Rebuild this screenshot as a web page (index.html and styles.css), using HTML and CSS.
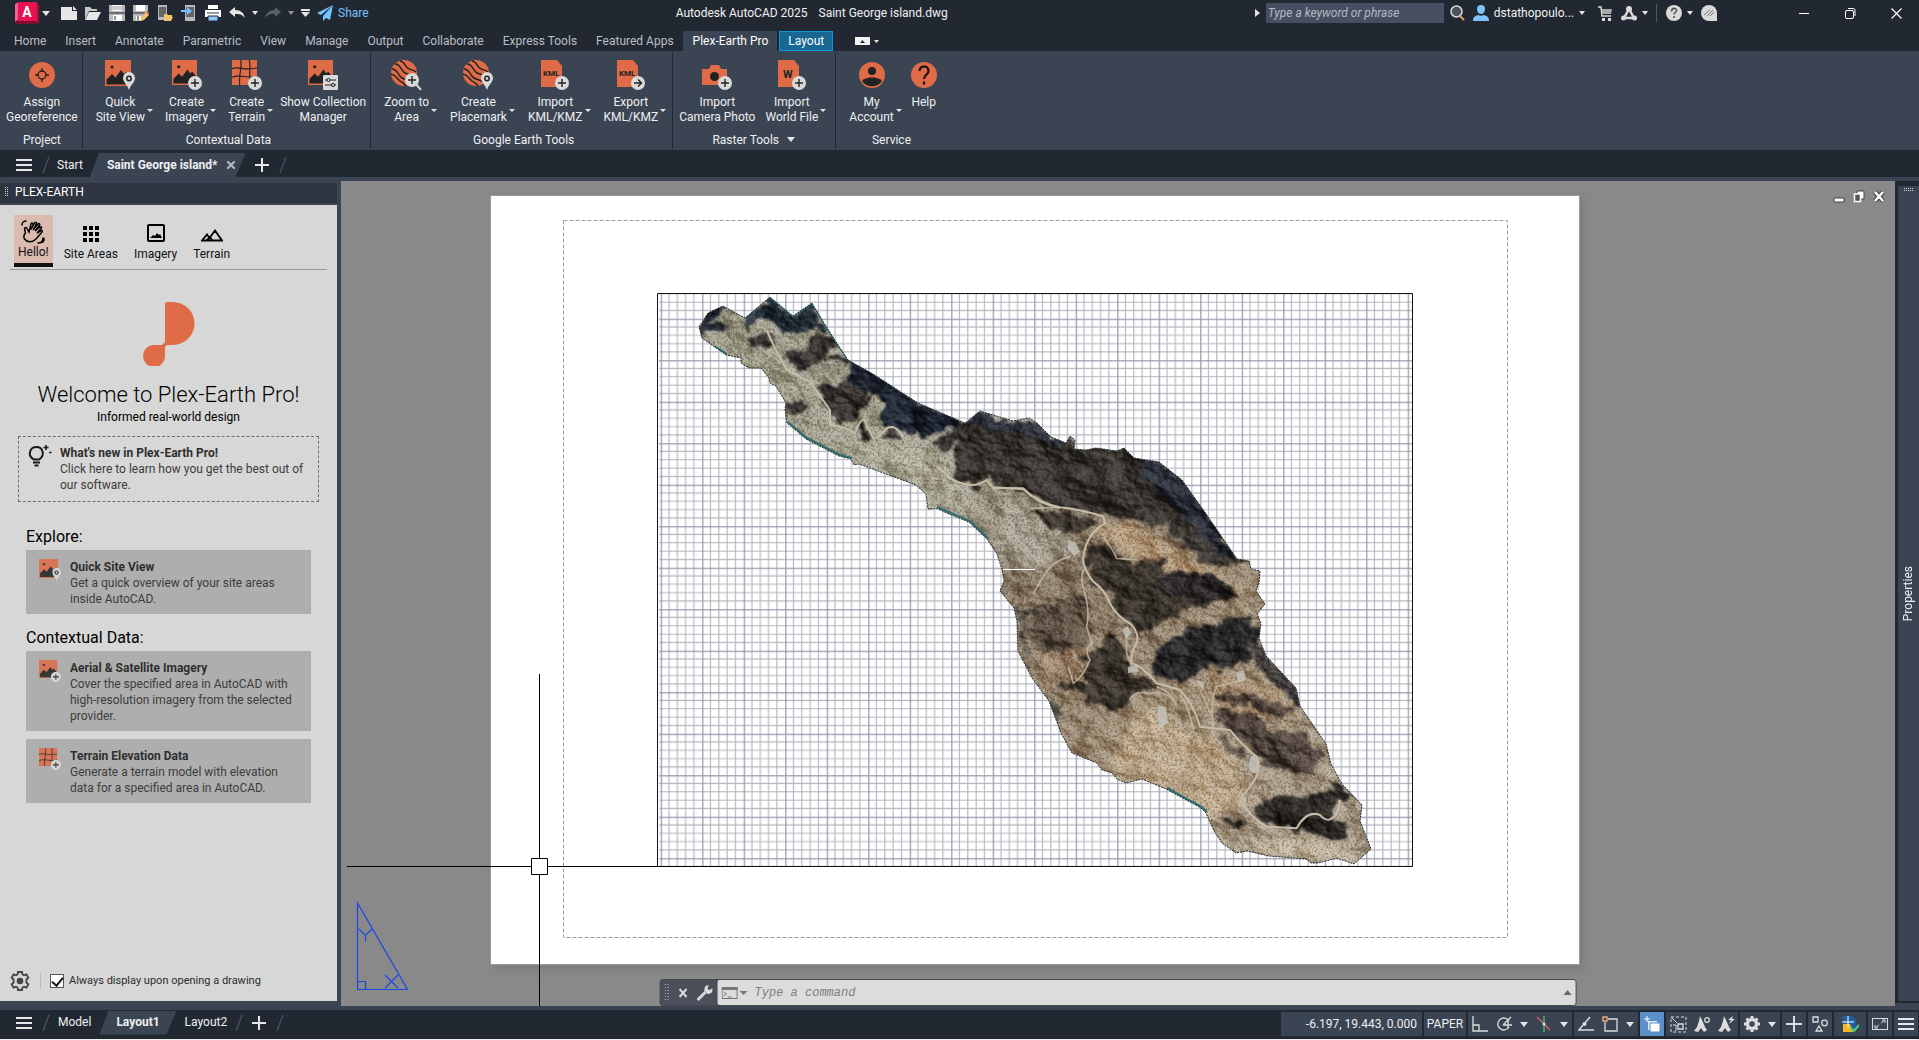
FILE: index.html
```html
<!DOCTYPE html>
<html lang="en">
<head>
    <meta charset="UTF-8">
    <meta name="viewport" content="width=device-width, initial-scale=1.0">
    <title>Autodesk AutoCAD 2025 - Saint George island.dwg</title>
    <link rel="stylesheet" href="styles.css">
</head>
<body>
    <!-- shared icons -->
    <svg class="sprite" aria-hidden="true">
        <symbol id="b-plus" viewBox="0 0 14 14">
            <circle cx="7" cy="7" r="7" fill="#d9d9d9"/>
            <path d="M7 3v8M3 7h8" stroke="#222" stroke-width="1.4"/>
        </symbol>
        <symbol id="b-pin" viewBox="0 0 12 18">
            <path d="M6 18C4.500 13 0 10 0 6a6 6 0 0 1 12 0c0 4-4.500 7-6 12z" fill="#d9d9d9"/>
            <circle cx="6" cy="6.500" r="2.200" fill="none" stroke="#222" stroke-width="1.500"/>
        </symbol>
        <symbol id="picture" viewBox="0 0 26 26">
            <path fill="#df6c46" d="M0 0h26v26H0z"/>
            <circle cx="7" cy="7" r="1.600" fill="#222"/>
            <path d="M1.500 24.500v-5L7 14l3.500 3.500L16 10l3 4 2-2 4 5v7.500z" fill="#222"/>
        </symbol>
        <symbol id="mesh" viewBox="0 0 26 26">
            <path fill="#df6c46" d="M0 0h26v26H0z"/>
            <path d="M9 0c2 6-2 12-1 26M18 0c2 7-1 13 1 26M0 9c7-3 14 3 26-1M0 18c8-4 16 2 26-1" fill="none" stroke="#222" stroke-width="1.200"/>
        </symbol>
        <symbol id="globe" viewBox="0 0 26 26">
            <circle cx="13" cy="13" r="13" fill="#df6c46"/>
            <path d="M9 1c5 0 5 7 9 8s5 1 7 3M4 4c6 0 6 7 10 9s6 1 11 4M1 9c6 0 6 7 10 9s6 2 10 4M0 14c5 1 6 5 9 7s4 2 6 5" fill="none" stroke="#222" stroke-width="1.500"/>
        </symbol>
        <symbol id="sheet" viewBox="0 0 21 27">
            <path fill="#df6c46" d="M0 0h16l5 6v21H0z"/>
        </symbol>
        <symbol id="i-site" viewBox="0 0 30 30">
            <use href="#picture" width="26" height="26"/>
            <use href="#b-pin" x="18" y="12" width="12" height="18"/>
        </symbol>
        <symbol id="i-imagery" viewBox="0 0 30 30">
            <use href="#picture" width="25" height="25"/>
            <use href="#b-plus" x="16" y="16" width="14" height="14"/>
        </symbol>
        <symbol id="i-terrain" viewBox="0 0 30 30">
            <use href="#mesh" width="25" height="25"/>
            <use href="#b-plus" x="16" y="16" width="14" height="14"/>
        </symbol>
        <symbol id="i-menu" viewBox="0 0 16 14">
            <path d="M0 2h16M0 7h16M0 12h16" stroke="#e6e6e6" stroke-width="2"/>
        </symbol>
        <symbol id="i-plus" viewBox="0 0 14 14">
            <path d="M7 0v14M0 7h14" stroke="#e6e6e6" stroke-width="2"/>
        </symbol>
        <symbol id="i-slash" viewBox="0 0 8 16">
            <path d="M1 16L7 0" stroke="#4d5766" stroke-width="1.200"/>
        </symbol>
    </svg>

    <header class="titlebar">
        <button class="app-logo" aria-label="Application menu">
            <svg width="24" height="22" viewBox="0 0 24 22">
                <path d="M0 2l4-2v17l-4 3z" fill="#f0609a"/>
                <path d="M3 18h18l3 4H0z" fill="#7d0d2c"/>
                <path d="M21 0l3 3v19l-3-3z" fill="#a01238"/>
                <path d="M3 0h19v19H3z" fill="#e8114f"/>
                <text x="12" y="15" text-anchor="middle" class="logo-letter">A</text>
            </svg>
            <i class="caret"></i>
        </button>
        <button class="qa" aria-label="New"><svg width="16" height="16"><path d="M0 2h11v4h5v9H0z" fill="#e6e6e6"/><path d="M12 1l4 4h-4z" fill="#e6e6e6"/></svg></button>
        <button class="qa" aria-label="Open"><svg width="16" height="16"><path d="M0 14V2h5l2 2h5v2H4z" fill="#c9c9c9"/><path d="M4 7h12l-4 8H0z" fill="#e6e6e6"/></svg></button>
        <button class="qa" aria-label="Save"><svg width="16" height="16"><path d="M0 0h16v16H0z" fill="#b9b9b9"/><path d="M3 0h10v6H3zM4 10h9v6H4z" fill="#fff"/><path d="M3 2h10M3 4h10" stroke="#999"/><path d="M0 8h16M6 11v4" stroke="#22272f"/></svg></button>
        <button class="qa" aria-label="Save as"><svg width="16" height="16"><path d="M0 0h15v8l-7 8H0z" fill="#b9b9b9"/><path d="M3 0h9v6H3zM3 11h5v4H3z" fill="#fff"/><path d="M0 8h12M5 11v4" stroke="#22272f"/><path d="M8 13l5-6 3 3-5 5-3 1z" fill="#f0c469"/><path d="M13 7l1.500-1L16 8v2z" fill="#e35b4c"/></svg></button>
        <button class="qa" aria-label="Open from web and mobile"><svg width="16" height="16"><path d="M1 0h9v15H1z" fill="#b9b9b9"/><path d="M2 2h7v10H2z" fill="#666"/><path d="M7 16V9h3l1 1h4v2h1l-2 4z" fill="#f0c469"/></svg></button>
        <button class="qa" aria-label="Save to web and mobile"><svg width="16" height="16"><path d="M4 0h10v16H4z" fill="#b9b9b9"/><path d="M5 2h8v10H5z" fill="#666"/><path d="M0 5h6V2l5 4-5 4V7H0z" fill="#74c2ff"/></svg></button>
        <button class="qa" aria-label="Plot"><svg width="16" height="16"><path d="M3 0h10v4H3zM0 5h16v7H0z" fill="#fff"/><path d="M2 8h12" stroke="#333"/><path d="M3 11h10v5H3z" fill="#8ccbff" stroke="#22272f"/></svg></button>
        <button class="qa" aria-label="Undo"><svg width="16" height="12"><path d="M0 5l6-5v3c6 0 9 3 10 8-3-4-6-4-10-4v3z" fill="#e6e6e6"/></svg></button>
        <button class="qa-arrow" aria-label="Undo list"><i class="caret small"></i></button>
        <button class="qa" aria-label="Redo"><svg width="16" height="12"><path d="M16 5l-6-5v3C4 3 1 6 0 11c3-4 6-4 10-4v3z" fill="#596069"/></svg></button>
        <button class="qa-arrow" aria-label="Redo list"><i class="caret small dim"></i></button>
        <button class="qa-custom" aria-label="Customize"><svg width="9" height="8"><path d="M0 1h9" stroke="#e6e6e6" stroke-width="2"/><path d="M0 3h9L4.500 8z" fill="#e6e6e6"/></svg></button>
        <button class="share"><svg width="16" height="16"><path d="M16 0L0 8l4 2zM16 0L6 11v5l3-3 4 2z" fill="#74c2ff"/></svg>Share</button>

        <h1 class="doc-title">Autodesk AutoCAD 2025 <span>Saint George island.dwg</span></h1>

        <div class="title-right">
            <svg width="5" height="8"><path d="M0 0l5 4-5 4z" fill="#e6e6e6"/></svg>
            <input class="search" type="text" placeholder="Type a keyword or phrase" aria-label="Search">
            <button class="icon-btn" aria-label="Find"><svg width="15" height="16"><circle cx="6.500" cy="6.500" r="5.500" fill="#4b535e" stroke="#d9d9d9" stroke-width="1.500"/><path d="M10 11l4 4" stroke="#d8a468" stroke-width="2"/></svg></button>
            <button class="user"><svg width="16" height="16"><path d="M4 4a4 4 0 0 1 8 0c0 3-2 5-4 5S4 7 4 4zM0 16c0-4 2-5 5-6 2 1 4 1 6 0 3 1 5 2 5 6z" fill="#80c4ff"/></svg>dstathopoulo...<i class="caret small"></i></button>
            <button class="icon-btn cart" aria-label="Cart"><svg width="14" height="15"><path d="M0 1h3l1 9h9" fill="none" stroke="#d9d9d9" stroke-width="1.500"/><path d="M4 3h10l-1 5H4z" fill="#a9a9a9"/><path d="M4 12h3v3H4zM10 12h3v3h-3z" fill="#d9d9d9"/></svg></button>
            <button class="icon-btn" aria-label="Autodesk App Store"><svg width="16" height="15"><path d="M8 3L3 12h10z" fill="none" stroke="#d9d9d9" stroke-width="2.500"/><circle cx="8" cy="3" r="3" fill="#d9d9d9"/><circle cx="2.500" cy="12" r="2.500" fill="#d9d9d9"/><circle cx="13.500" cy="12" r="2.500" fill="#d9d9d9"/></svg><i class="caret small"></i></button>
            <span class="bar"></span>
            <button class="icon-btn help-top" aria-label="Help"><svg width="16" height="16"><circle cx="8" cy="8" r="8" fill="#d9d9d9"/><path d="M5.500 6.500c0-4 5-4 5-1 0 2-2.500 2-2.500 4M8 11v2" fill="none" stroke="#555" stroke-width="1.600"/></svg><i class="caret small"></i></button>
            <button class="icon-btn" aria-label="Feedback"><svg width="16" height="16"><path d="M8 0a8 8 0 0 1 8 8v8H8A8 8 0 0 1 8 0z" fill="#d9d9d9"/><path d="M3 10l6-5M6 11l6-6M9 11l4-4" stroke="#777"/></svg></button>
            <div class="window-btns">
                <button aria-label="Minimize"><svg width="10" height="10"><path d="M0 5.500h10" stroke="#fff"/></svg></button>
                <button aria-label="Restore"><svg width="11" height="11"><rect x=".5" y="2.500" width="8" height="8" rx="1.500" fill="none" stroke="#fff"/><path d="M3 .5h5a2 2 0 0 1 2 2V8" fill="none" stroke="#fff"/></svg></button>
                <button aria-label="Close"><svg width="11" height="11"><path d="M.5.5l10 10M10.500.5l-10 10" stroke="#fff" stroke-width="1.200"/></svg></button>
            </div>
        </div>
    </header>

    <nav class="ribbon-tabs">
        <button>Home</button>
        <button>Insert</button>
        <button>Annotate</button>
        <button>Parametric</button>
        <button>View</button>
        <button>Manage</button>
        <button>Output</button>
        <button>Collaborate</button>
        <button>Express Tools</button>
        <button>Featured Apps</button>
        <button class="active">Plex-Earth Pro</button>
        <button class="context">Layout</button>
        <button class="minimize" aria-label="Minimize ribbon"><svg width="24" height="8"><path d="M0 0h15v8H0z" fill="#f2f2f2"/><path d="M5 6l2.500-3L10 6z" fill="#22272f"/><path d="M19 3h5l-2.500 3z" fill="#e6e6e6"/></svg></button>
    </nav>

    <section class="ribbon">
        <div class="group">
            <div class="tools">
                <button class="tool"><svg width="30" height="30"><circle cx="15" cy="15" r="13" fill="#df6c46"/><circle cx="15" cy="15" r="4" fill="none" stroke="#222" stroke-width="1.300"/><path d="M15 8v4M15 18v4M8 15h4M18 15h4" stroke="#222" stroke-width="1.300"/></svg><span>Assign<br>Georeference</span></button>
            </div>
            <h2>Project</h2>
        </div>
        <div class="group">
            <div class="tools">
                <button class="tool menu"><svg width="30" height="30"><use href="#i-site"/></svg><span>Quick<br>Site View</span></button>
                <button class="tool menu"><svg width="30" height="30"><use href="#i-imagery"/></svg><span>Create<br>Imagery</span></button>
                <button class="tool menu"><svg width="30" height="30"><use href="#i-terrain"/></svg><span>Create<br>Terrain</span></button>
                <button class="tool"><svg width="30" height="30"><use href="#picture" width="25" height="25"/><rect x="15" y="15" width="15" height="15" rx="1" fill="#d9d9d9"/><path d="M17 20h11M17 25h11" stroke="#222"/><circle cx="20.500" cy="20" r="1.600" fill="#d9d9d9" stroke="#222"/><circle cx="25" cy="25" r="1.600" fill="#d9d9d9" stroke="#222"/></svg><span>Show Collection<br>Manager</span></button>
            </div>
            <h2>Contextual Data</h2>
        </div>
        <div class="group roomy">
            <div class="tools">
                <button class="tool menu"><svg width="31" height="30"><use href="#globe" width="26" height="26"/><path d="M24 23l6 7" stroke="#d9d9d9" stroke-width="2"/><use href="#b-plus" x="14" y="13" width="14" height="14"/></svg><span>Zoom to<br>Area</span></button>
                <button class="tool menu"><svg width="30" height="30"><use href="#globe" width="26" height="26"/><use href="#b-pin" x="18" y="12" width="12" height="18"/></svg><span>Create<br>Placemark</span></button>
                <button class="tool menu"><svg width="30" height="30"><use href="#sheet" x="1" width="21" height="27"/><text x="3" y="16" class="kml">KML</text><use href="#b-plus" x="15" y="16" width="14" height="14"/></svg><span>Import<br>KML/KMZ</span></button>
                <button class="tool menu"><svg width="30" height="30"><use href="#sheet" x="1" width="21" height="27"/><text x="3" y="16" class="kml">KML</text><circle cx="22" cy="23" r="7" fill="#d9d9d9"/><path d="M18 23h7M22 19.500l3.500 3.500-3.500 3.500" fill="none" stroke="#222" stroke-width="1.400"/></svg><span>Export<br>KML/KMZ</span></button>
            </div>
            <h2>Google Earth Tools</h2>
        </div>
        <div class="group tight">
            <div class="tools">
                <button class="tool"><svg width="30" height="30"><path d="M0 9h7l2-4h8l2 4h6v16H0z" fill="#df6c46"/><circle cx="12.500" cy="16.500" r="4.500" fill="#222"/><use href="#b-plus" x="16" y="16" width="14" height="14"/></svg><span>Import<br>Camera Photo</span></button>
                <button class="tool menu"><svg width="30" height="30"><use href="#sheet" x="1" width="21" height="27"/><text x="6" y="18" class="wf">W</text><use href="#b-plus" x="15" y="16" width="14" height="14"/></svg><span>Import<br>World File</span></button>
            </div>
            <h2>Raster Tools <i class="caret"></i></h2>
        </div>
        <div class="group last">
            <div class="tools">
                <button class="tool menu"><svg width="30" height="30"><circle cx="15" cy="15" r="13" fill="#df6c46"/><circle cx="15" cy="11" r="4" fill="#222"/><path d="M5 21c5-5 15-5 20 0a12 12 0 0 1-20 0z" fill="#222"/></svg><span>My<br>Account</span></button>
                <button class="tool"><svg width="30" height="30"><circle cx="15" cy="15" r="13" fill="#df6c46"/><path d="M10.500 11c0-6 9-6 9 0 0 4-4.500 3.500-4.500 8M15 21.500v3" fill="none" stroke="#111" stroke-width="2.200"/></svg><span>Help<br>&nbsp;</span></button>
            </div>
            <h2>Service</h2>
        </div>
    </section>

    <nav class="file-tabs">
        <button aria-label="Menu"><svg width="16" height="14"><use href="#i-menu"/></svg></button>
        <svg class="slash" width="8" height="16"><use href="#i-slash"/></svg>
        <button class="ftab">Start</button>
        <button class="ftab active">Saint George island*<svg width="8" height="8"><path d="M0 0l8 8M8 0L0 8" stroke="#b5bac2" stroke-width="2"/></svg></button>
        <button class="add" aria-label="New drawing"><svg width="14" height="14"><use href="#i-plus"/></svg></button>
        <svg class="slash" width="8" height="16"><use href="#i-slash"/></svg>
    </nav>

    <main class="workspace">
        <aside class="palette">
            <div class="palette-title"><i class="grip"></i>PLEX-EARTH</div>
            <div class="palette-body">
                <div class="ptabs">
                    <button class="ptab active">
                        <svg width="24" height="24" viewBox="0 0 24 24" fill="none" stroke="#000" stroke-width="1.500" stroke-linecap="round"><path d="M4.500 13L3.500 9c0-2 2-2 2.500-.5L8 12l2-8c1-1.500 2-1 2 .5M10 9l3.500-6c1-1.200 2.300-.4 2 .8L12 10l5-6c1.200-1 2.300 0 1.500 1.200L14 11l5-4c1.400-.6 2 .6 1.200 1.600L16 13l4-2.500c1.400-.3 1.700 1 .8 1.800L15 19c-4 4-9 3.500-11.500 0-1-2-1-4 1-6"/><path d="M1 5c0-2 1.500-4 4-4M20 22.500c2 0 3.500-2 3-4M17 23c2 0 5-1 5-5"/></svg>
                        <span>Hello!</span>
                    </button>
                    <button class="ptab">
                        <svg width="16" height="16"><path d="M0 0h4v4H0zM6 0h4v4H6zM12 0h4v4h-4zM0 6h4v4H0zM6 6h4v4H6zM12 6h4v4h-4zM0 12h4v4H0zM6 12h4v4H6zM12 12h4v4h-4z"/></svg>
                        <span>Site Areas</span>
                    </button>
                    <button class="ptab">
                        <svg width="18" height="18"><rect x="1" y="1" width="16" height="16" rx="1" fill="none" stroke="#000" stroke-width="2"/><path d="M3 14l3-3 2 1 2-3 2 2 1-1 2 4z"/></svg>
                        <span>Imagery</span>
                    </button>
                    <button class="ptab">
                        <svg width="22" height="14"><path d="M1 12.500l5-6 2.500 3.500L14 2.500l7 10zM6 12l3-3 2 3" fill="none" stroke="#000" stroke-width="1.800"/></svg>
                        <span>Terrain</span>
                    </button>
                </div>

                <svg class="brand" width="52" height="64" viewBox="0 0 52 64"><path d="M22 2a2 2 0 0 1 2-2h6a21 21 0 0 1 0 43h-6l-2 2v8a11 11 0 1 1-11-10h8l3-3z" fill="#df6c46"/></svg>
                <h2 class="welcome">Welcome to Plex-Earth Pro!</h2>
                <p class="tagline">Informed real-world design</p>

                <button class="news">
                    <svg width="24" height="22" viewBox="0 0 24 22" fill="none" stroke="#1b1b1b" stroke-width="2"><path d="M6 14.500C-1 11 1.500 2 8.500 2S17 11 11 14.500zM5 17.500h7M6.500 20.500h4"/><path d="M18 0v5M15.500 2.500h5M21 7.500h2.500" stroke-width="1.600"/></svg>
                    <span><b>What's new in Plex-Earth Pro!</b>Click here to learn how you get the best out of our software.</span>
                </button>

                <h3>Explore:</h3>
                <button class="card">
                    <svg width="22" height="22" viewBox="0 0 30 30"><use href="#i-site"/></svg>
                    <span><b>Quick Site View</b>Get a quick overview of your site areas inside AutoCAD.</span>
                </button>
                <h3>Contextual Data:</h3>
                <button class="card">
                    <svg width="22" height="22" viewBox="0 0 30 30"><use href="#i-imagery"/></svg>
                    <span><b>Aerial &amp; Satellite Imagery</b>Cover the specified area in AutoCAD with high-resolution imagery from the selected provider.</span>
                </button>
                <button class="card">
                    <svg width="22" height="22" viewBox="0 0 30 30"><use href="#i-terrain"/></svg>
                    <span><b>Terrain Elevation Data</b>Generate a terrain model with elevation data for a specified area in AutoCAD.</span>
                </button>

                <div class="palette-foot">
                    <button aria-label="Settings"><svg width="20" height="20" viewBox="0 0 20 20"><path d="M8 1h4l.5 2.500 1.500.8 2.400-1 2 3.400-2 1.700v3.200l2 1.700-2 3.400-2.400-1-1.500.8L12 19H8l-.5-2.500-1.500-.8-2.400 1-2-3.400 2-1.700V8.400l-2-1.700 2-3.400 2.400 1 1.500-.8z" fill="none" stroke="#444" stroke-width="1.800"/><circle cx="10" cy="10" r="3.300" fill="#444"/></svg></button>
                    <i class="sep"></i>
                    <input type="checkbox" id="always" checked>
                    <label for="always">Always display upon opening a drawing</label>
                </div>
            </div>
        </aside>

        <section class="canvas">
            <svg class="drawing" viewBox="341 181 1554 825">
                <defs>
                    <pattern id="grid" x="660.700" y="318.700" width="41.500" height="41.500" patternUnits="userSpaceOnUse">
                        <path d="M8.300 0v41.500M16.600 0v41.500M24.900 0v41.500M33.200 0v41.500M0 8.300h41.500M0 16.600h41.500M0 24.900h41.500M0 33.200h41.500" stroke="#b4b5bd" stroke-width="1.100"/>
                        <path d="M.6 0v41.500M0 .6h41.500" stroke="#9699ab" stroke-width="1.300"/>
                    </pattern>
                    <path id="outline" d="M699 327l9-14 15-7 22 12 25-21 23 19 19-13 15 25 21 32 25 14 45 29 47 20 15-12 33 10 16-3 8 5 14 14 15 6 4-7 5 4-1 9 12 1 10-2 21 3 7-3 10 10 25 4 23 18 20 28 35 51 12 2 2 8 9 2-1 12-3 8 9 13-8 10 4 9-2 15 7 18 30 32 4 18 26 38 5 20 11 20 20 21-2 16 11 28-17 15-17-6-19 5h-7l-5-4-37-3-22-5-11 2-14-10-8-12-8-18-5-5-35-19-24-10-16 4-9-4-5-6-10-3-5-7-25-10-11-20-12-32-17-23-14-27-1-30-3-13-14-17 4-10-2-12-5-15-10-15-18-17-20-8-13-6-4 1h-4l-2-15-10-9-57-21-5 1-3-6-12-3-33-17-19-16-2-14 1-6-10-17-6-3-1-5-8-10h-12l-8-5v-5l-15-3-24-17z"/>
                    <clipPath id="coast"><use href="#outline"/></clipPath>
                    <linearGradient id="land" x1="0" y1="0" x2="1" y2="1">
                        <stop offset="0" stop-color="#a9a693"/>
                        <stop offset=".35" stop-color="#b5b2a0"/>
                        <stop offset=".5" stop-color="#94846f"/>
                        <stop offset=".72" stop-color="#ad9b82"/>
                        <stop offset="1" stop-color="#b9af9c"/>
                    </linearGradient>
                    <filter id="rough" x="-5%" y="-5%" width="110%" height="110%">
                        <feTurbulence type="fractalNoise" baseFrequency=".07" numOctaves="5" seed="4"/>
                        <feDisplacementMap in="SourceGraphic" scale="18" xChannelSelector="R" yChannelSelector="G"/>
                        <feGaussianBlur stdDeviation="1"/>
                    </filter>
                    <filter id="grain" x="0" y="0" width="100%" height="100%" color-interpolation-filters="sRGB">
                        <feTurbulence type="fractalNoise" baseFrequency=".45" numOctaves="3" seed="9"/>
                        <feColorMatrix values="0 0 0 0 .12  0 0 0 0 .11  0 0 0 0 .12  3.400 0 0 0 -1.600"/>
                    </filter>
                    <filter id="relief" x="0" y="0" width="100%" height="100%" color-interpolation-filters="sRGB">
                        <feTurbulence type="fractalNoise" baseFrequency=".03 .04" numOctaves="5" seed="12"/>
                        <feDiffuseLighting surfaceScale="11" diffuseConstant=".72" lighting-color="#fff">
                            <feDistantLight azimuth="150" elevation="42"/>
                        </feDiffuseLighting>
                    </filter>
                    <filter id="soft"><feGaussianBlur stdDeviation="4"/></filter>
                </defs>

                <!-- paper -->
                <path d="M494 198h1090v771H494z" fill="#707070" opacity=".55" filter="url(#soft)"/>
                <path d="M490.500 195.500h1089v769h-1089z" fill="#fff" stroke="#9b9b9b"/>
                <path d="M563.500 220.500h944v717h-944z" fill="none" stroke="#9a9a9a" stroke-dasharray="4 2"/>
                <path d="M659 294h754v572H659z" fill="url(#grid)"/>

                <!-- island -->
                <g clip-path="url(#coast)" class="island">
                    <path d="M690 290h690v580H690z" fill="url(#land)"/>
                    <g filter="url(#soft)">
                        <path d="M1130 720l30-15 20 25 50 10 20 60-40 20-60-25-40-30z" fill="#c9b598"/>
                        <path d="M1090 530l40-10 40 25 50 30 25 15-10 10-40-20-60-20z" fill="#c0a685"/>
                        <path d="M1035 650l60 0 0 40-50 0z" fill="#b0967a" opacity=".7"/>
                        <path d="M1005 500l40 10 30 40-40 20-40-20z" fill="#b3ad9d"/>
                        <path d="M1240 840l60-5 60 15-10 10-90-5z" fill="#cbbea6"/>
                        <path d="M860 430l50 15 60 50-30-5-70-35z" fill="#bdb9a6"/>
                        <path d="M1210 670l70 20 20 30-90-10z" fill="#b39a7c"/>
                    </g>
                    <g filter="url(#rough)">
                        <g transform="translate(640 280) scale(.3333)" fill="#3d3834">
                            <path d="M178 142l27-42 45-22-15 25-22 24 55 12-68 15-10 15z" fill="#222b38"/>
                            <path d="M315 115l75-65 70 57 57-37 40 70-40 5-65 20-35-10-10-25-30-5-60 20z" fill="#2c3640"/>
                            <path d="M330 185l50-35 20 50-55 5zM430 225l50-5 20-40 40-20 50 10 15 30-65 35-40 35-30 5z"/>
                            <path d="M540 235l85-5 75 42 60 45-30 8-40-20-20 50 30-15-50 80-45 15-35-40-40-75 70-12 35-20 5-35-60 0z"/>
                            <path d="M640 240l60 30 135 95 145 62-40 16-60 12-50 5-40-10-50-10-20-40 10-30-60-40-50-35z" fill="#232c38"/>
                            <path d="M430 385l40-20 50 10-40 25-35 10zM660 460l10-36 22 48-42-5zM730 472l22-27 28 15 10 18z"/>
                            <path d="M760 400l60 20-20 40-30-10zM840 420l40 20-40 30zM910 460l50-20-40 50z" fill="#2a333f"/>
                            <path d="M975 430l45-38 100 30 48-7 92 65v205l-60-25-40-35-100-5-10-30-40 30-70-30 5-90 15-30-60 40-20-10 50-50z"/>
                        </g>
                        <g transform="translate(950 400) scale(.3333)" fill="#433a32">
                            <path d="M50 70l40-40 95 30 55-10 65 58 45 17 13-20 12 40 65-5 65 10 20-10 30 32 75 11 70 54 60 83 105 155 35 5-40 20-40 0-80-30-40-40-80-60-60-10-60 0-35-15-135-25-50-10-60-45-90-5-20-25-40 25-60-20 5-80z" fill="#413a35"/>
                            <path d="M50 70l40-40 95 30 55-10 65 58 45 17-20 20-60-30-90-20-60 0zM560 175l70 8 70 54 60 83 105 155-45-10-50-40-80-90-50-60-60-40z" fill="#2d333c"/>
                            <path d="M240 335l60-5 140 20v20l-80 40-70-40z"/>
                            <path d="M410 510l30-30 60-5 60 10 40-15 40 20 10 25 90 15 60 0 60 40 5 30-65 0-60 10-60 40-90 40-30 10-10-30-50-30-20-50-20-20-50-30zM420 430l60 5 20 40-60 5-40 20z"/>
                            <path d="M600 560l50-45 50 5 100 10 70 70-50-10-80 10-80-10z" fill="#322e2e"/>
                            <path d="M620 770l20-50 80-40 50 5 50-35 90-5 20 55-30 40-10 50-70 20-60-10-30 40-80 10-50-40z" fill="#2e2d2f"/>
                            <path d="M260 620l70-20 80-10 10 110-20 50-130 0-20-50z" opacity=".55"/>
                            <path d="M390 780l110-80 30 60 10 40 80 60-60 20-30 40-60 10-70-40-80-30 10-20 90 10z"/>
                            <path d="M800 880l70-10 80 30 90 20-40 35-100-35-100-20zM790 940l40-15 70 15 40 50 60 0 60 20 50 50-20 60-110-10-50-30-30-40-30-30-30-25-40-5z" opacity=".8"/>
                            <path d="M900 1210l100-20 130-15 20-40 50 45v30l-40-10 10 30-40 30 50 10 20 40-70 0-80-20-50-10-50-10-50-40zM800 1260l50-10 50 10-40 20z" fill="#302d2c"/>
                            <path d="M900 690l50 75 90 95 12 55-52-35-70-80-30-40z" fill="#2b2d31" opacity=".75"/>
                            <path d="M790 1010l90 30 30 50-40-10zM200 650l60-40 30-5-70 55zM210 690l50 0 40 10-60 10zM320 860l60-10 40 30-30 10z" opacity=".75"/>
                            <path d="M205 620l40 10-30 60 20 70-30-20zM280 880l60 60-10 50-40-60z" fill="#3b4140" opacity=".6"/>
                            <path d="M1045 920l90 110 40 110 60 70 0-60-90-140z" fill="#4b5254"/>
                        </g>
                    </g>
                    <path class="relief" d="M690 290h690v580H690z" filter="url(#relief)"/>
                    <path d="M690 290h690v580H690z" filter="url(#grain)" opacity=".35"/>
                    <!-- dirt roads -->
                    <g fill="none" stroke="#c5bda8" stroke-width="6" stroke-linejoin="round">
                        <path transform="translate(640 280) scale(.3333)" d="M380 150q20 50 60 120l70 35 60 85v45q50 5 75 25 15-40 27-42l28 57q20-5 40-30 30-15 50 30M890 560l50 40q60 30 100 0l20 25h90q40 45 110 60"/>
                        <g transform="translate(950 400) scale(.3333)">
                            <path d="M130 262l90 6q50 42 110 54 70 8 130 28l5 20q-55 30-65 100-5 30 30 75 35 25 50 65 20 40 60 60 30 30 20 60-20 30-15 60 35 10 75 60l70 20q40 40 60 110l90 10q40 50 80 80 20 40-20 90l-30 40q30 50 80 80l90 5q30-55 70-40 30 35 55-15l5-30"/>
                            <path d="M400 510q-10 30 5 70 15 60 5 100l15 50q-25 20-5 50-20 50-50 70l-15-50M240 325l90-3M460 410q30 40 40 65l60 5M360 470q-50 10-80 60l-30 50M540 900q10-30 60-20 60-10 80 40M620 860q50 20 60 60M690 880q30 50 40 110M530 700v60l15 40M790 980q-10-80 10-120l80-20M750 870l35 80" stroke-width="5" opacity=".8"/>
                        </g>
                    </g>
                    <g fill="#c4c4bd" opacity=".8">
                        <path d="M1068 540l8 2 4 10-6 4-6-8zM1122 630l6-4 3 8-5 5zM1128 667l10-2v7l-10 1zM1236 672l8-2 2 10-8 2zM1195 680l10 2-2 8zM1158 705l8 2 2 16-9 6z"/>
                        <ellipse cx="1254" cy="764" rx="5" ry="9"/>
                    </g>
                    <path d="M1003 569.500h32" stroke="#fff"/>
                    <path d="M788 422l19 16 33 17 12 3M937 507l33 14 18 17M1167 788l35 19 5 5M1301 705l26 38M1332 763l11 20 20 21M770 297l23 19 19-13 15 25 21 32M714 346l13 8M1361 820l11 28" fill="none" stroke="#2b6e70" stroke-width="2"/>
                </g>
                <use href="#outline" fill="none" stroke="#1d2a2c" stroke-dasharray="2 1"/>
                <path d="M657.500 293.500h755v573h-755z" fill="none" stroke="#111"/>

                <!-- crosshair -->
                <path d="M347 866.500h385M539.500 674v332" stroke="#000"/>
                <path d="M531.500 858.500h16v16h-16z" fill="#fff" stroke="#000"/>
                <!-- ucs -->
                <path d="M357.500 903v86.500h50zM357.500 981.500h8v8M359 929l6.500 6.500L372 929M365.500 935v6.500M385 975l13 13M398 975l-13 13" fill="none" stroke="#1748e8" stroke-width="1.200"/>
            </svg>

            <div class="view-btns">
                <button aria-label="Minimize drawing"><svg width="12" height="13"><path d="M1 8h10v4H1z" fill="#fff" stroke="#444"/></svg></button>
                <button aria-label="Restore drawing"><svg width="12" height="13"><path d="M4 1h7v8H4z" fill="#fff" stroke="#444"/><path d="M1.500 4h6v7.500h-6z" fill="#555" stroke="#fff" stroke-width="1.500"/></svg></button>
                <button aria-label="Close drawing"><svg width="12" height="13"><path d="M2 2l8 9M10 2l-8 9" stroke="#444" stroke-width="4.500"/><path d="M2 2l8 9M10 2l-8 9" stroke="#fff" stroke-width="2.500"/></svg></button>
            </div>

            <div class="command">
                <i class="grip tall"></i>
                <button aria-label="Close"><svg width="9" height="10"><path d="M1 1l7 8M8 1L1 9" stroke="#d9d9d9" stroke-width="2"/></svg></button>
                <button aria-label="Customize"><svg width="16" height="16"><path d="M1 15L9 7" stroke="#d9d9d9" stroke-width="3"/><path d="M8 6c-1-3 1-6 4-6l-1 4 2 1 3-2c1 4-2 6-5 6z" fill="#d9d9d9"/></svg></button>
                <div class="command-line">
                    <button aria-label="Recent commands"><svg width="26" height="12"><rect x=".5" y=".5" width="15" height="11" fill="none" stroke="#777"/><path d="M0 0h16v3H0z" fill="#777"/><path d="M2 5l3 2-3 2M6 10h4" fill="none" stroke="#777"/><path d="M18 4h8l-4 4z" fill="#777"/></svg></button>
                    <input type="text" placeholder="Type a command" aria-label="Command">
                    <button aria-label="Command history"><svg width="8" height="5"><path d="M0 5l4-5 4 5z" fill="#666"/></svg></button>
                </div>
            </div>
        </section>

        <aside class="properties"><div><i class="grip wide"></i><span>Properties</span></div></aside>
    </main>

    <footer class="status">
        <nav class="file-tabs layouts">
            <button aria-label="Menu"><svg width="16" height="14"><use href="#i-menu"/></svg></button>
            <svg class="slash" width="8" height="16"><use href="#i-slash"/></svg>
            <button class="ftab">Model</button>
            <button class="ftab active">Layout1</button>
            <button class="ftab">Layout2</button>
            <svg class="slash" width="8" height="16"><use href="#i-slash"/></svg>
            <button class="add" aria-label="New layout"><svg width="14" height="14"><use href="#i-plus"/></svg></button>
            <svg class="slash" width="8" height="16"><use href="#i-slash"/></svg>
        </nav>
        <div class="status-tools">
            <button class="coords">-6.197, 19.443, 0.000</button>
            <button class="space">PAPER</button>
            <div class="cell">
                <button aria-label="Ortho"><svg width="16" height="16"><path d="M1 0v15h15M1 9h6v6" fill="none" stroke="#ddd" stroke-width="1.300"/></svg></button>
                <button aria-label="Polar tracking"><svg width="16" height="16"><path d="M13 5a6 6 0 1 0 0 6M7 9l8-8M7 9h9M12 5v8" fill="none" stroke="#ddd" stroke-width="1.300"/></svg></button>
                <button class="more" aria-label="Polar options"><i class="caret"></i></button>
                <button aria-label="Isometric drafting"><svg width="16" height="16"><path d="M1 1l13 13" stroke="#e0605e" stroke-width="1.300"/><path d="M8 0v16" stroke="#4fc77b" stroke-width="1.300"/><circle cx="8" cy="8" r="1.500" fill="#ddd"/></svg></button>
                <button class="more" aria-label="Isometric options"><i class="caret"></i></button>
            </div>
            <div class="cell">
                <button aria-label="Object snap tracking"><svg width="16" height="16"><path d="M12 1L1 14h15" fill="none" stroke="#ddd" stroke-width="1.400"/><circle cx="6.500" cy="8" r="2" fill="#ddd"/></svg></button>
                <button aria-label="Object snap"><svg width="17" height="16"><path d="M6 3h9v12H3V6" fill="none" stroke="#ddd" stroke-width="1.300"/><path d="M1 1h4v4H1z" fill="none" stroke="#f0a878" stroke-width="1.400"/></svg></button>
                <button class="more" aria-label="Snap options"><i class="caret"></i></button>
            </div>
            <div class="cell on">
                <button aria-label="Selection cycling"><svg width="16" height="16"><path d="M4 5h9v9H4z" fill="#dfe9f5"/><path d="M6 7h10v9H6z" fill="#fff" stroke="#5b8fc7"/><path d="M3 0v6M0 3h6" stroke="#fff"/></svg></button>
            </div>
            <div class="cell">
                <button aria-label="Isolate"><svg width="17" height="17"><path d="M1 1h15v15H1z" fill="none" stroke="#ddd" stroke-dasharray="3 2"/><path d="M8 8h5v5H8z" fill="none" stroke="#ddd" stroke-width="1.300"/><path d="M1 1l6 6M3 9h3v6" fill="none" stroke="#ddd"/></svg></button>
                <button aria-label="Annotation visibility"><svg width="17" height="16"><path d="M6 0l2 4 3 7 2 3-3 2-3-4-3 4-4-1 3-4 2-6z" fill="#ddd"/><circle cx="13" cy="4" r="2.300" fill="none" stroke="#ddd" stroke-width="1.300"/></svg></button>
                <button aria-label="Auto scale"><svg width="17" height="16"><path d="M6 0l2 4 3 7 2 3-3 2-3-4-3 4-4-1 3-4 2-6z" fill="#ddd"/><path d="M15 0l-5 4h3l-2 4 6-5h-3z" fill="#ddd"/></svg></button>
            </div>
            <div class="cell">
                <button aria-label="Workspace"><svg width="16" height="16"><circle cx="8" cy="8" r="4.500" fill="none" stroke="#ddd" stroke-width="3.500"/><path d="M8 0v3M8 13v3M0 8h3M13 8h3M2.500 2.500l2 2M11.500 11.500l2 2M13.500 2.500l-2 2M4.500 11.500l-2 2" stroke="#ddd" stroke-width="3"/></svg></button>
                <button class="more" aria-label="Workspace options"><i class="caret"></i></button>
            </div>
            <div class="cell"><button aria-label="Annotation monitor"><svg width="16" height="16"><path d="M8 0v16M0 8h16" stroke="#ddd" stroke-width="2"/></svg></button></div>
            <div class="cell"><button aria-label="Units"><svg width="16" height="16"><path d="M1 1h5v5H1zM4 15l3-5 3 5z" fill="none" stroke="#ddd" stroke-width="1.300"/><circle cx="12.500" cy="7" r="2.800" fill="none" stroke="#ddd" stroke-width="1.300"/></svg></button></div>
            <div class="cell wide"><button aria-label="Trusted file"><svg width="17" height="17"><path d="M1 0h9l4 4v11H1z" fill="#1f5fa8"/><path d="M1 8h7l3 8H1z" fill="#f5b829"/><path d="M6 0v11M0 6h12" stroke="#fff"/><path d="M9 12l3 3 5-6" fill="none" stroke="#4fd17c" stroke-width="2"/></svg></button></div>
            <div class="cell"><button aria-label="Clean screen"><svg width="16" height="12"><rect x=".5" y=".5" width="15" height="11" fill="none" stroke="#ddd"/><path d="M9 5l4-3M10 2h3v3M7 7l-4 3M3 7v3h3" fill="none" stroke="#ddd"/></svg></button></div>
            <div class="cell"><button aria-label="Customization"><svg width="16" height="14"><use href="#i-menu"/></svg></button></div>
        </div>
    </footer>
</body>
</html>
```
FILE: styles.css
```css
* {
    box-sizing: border-box;
}
body {
    margin: 0;
    height: 100vh;
    display: flex;
    flex-direction: column;
    overflow: hidden;
    background-color: #f0f0f0;
    color: #eef0f2;
    font: 12px/15px Roboto, "Liberation Sans", sans-serif;
}
button, input {
    font: inherit;
    color: inherit;
}
button {
    display: flex;
    align-items: center;
    justify-content: center;
    padding: 0;
    border: 0;
    background: none;
    text-align: center;
}
svg {
    display: block;
    flex: none;
}
h1, h2, h3, p {
    margin: 0;
    font-size: 12px;
    font-weight: normal;
}
.sprite {
    position: absolute;
    width: 0;
    height: 0;
}
.caret {
    display: inline-block;
    border: 4px solid transparent;
    border-top: 5px solid #e6e6e6;
    border-bottom: 0;
}
.caret.small {
    border-width: 3px;
    border-top-width: 4px;
    border-bottom: 0;
}
.caret.dim {
    border-top-color: #8a9099;
}

/* title bar */
.titlebar {
    display: flex;
    align-items: center;
    height: 26px;
    padding-left: 15px;
    background-color: #222831;
}
.app-logo {
    gap: 3px;
    width: 42px;
    justify-content: flex-start;
}
.logo-letter {
    font: bold 14px Roboto, sans-serif;
    fill: #fff;
}
.qa {
    width: 24px;
    height: 24px;
}
.qa-arrow {
    width: 12px;
    height: 24px;
}
.qa-custom {
    width: 17px;
}
.share {
    gap: 5px;
    padding-left: 3px;
    color: #74c2ff;
}
.doc-title {
    flex: 1;
    text-align: center;
}
.doc-title span {
    margin-left: 8px;
}
.title-right {
    display: flex;
    align-items: center;
}
.search {
    width: 178px;
    height: 20px;
    margin: 0 6px;
    padding: 0 2px;
    border: 0;
    border-radius: 0;
    background-color: #464f61;
    font-size: 12px;
}
.search::placeholder {
    color: #b4b9c2;
    font-style: italic;
    opacity: 1;
}
.icon-btn {
    gap: 5px;
    margin-right: 8px;
}
.icon-btn.cart {
    margin-right: 9px;
}
.user {
    gap: 5px;
    margin-right: 13px;
}
.bar {
    width: 1px;
    height: 18px;
    margin-right: 9px;
    background-color: #4d5766;
}
.window-btns {
    display: flex;
    margin-left: 56px;
}
.window-btns button {
    width: 46px;
    height: 26px;
}

/* ribbon */
.ribbon-tabs {
    display: flex;
    height: 25px;
    padding: 5px 0 0 4px;
    background-color: #222831;
}
.ribbon-tabs button {
    padding: 0 9px 0 10px;
    color: #b9bec6;
}
.ribbon-tabs .active {
    margin-right: 2px;
    background-color: #3b4453;
    color: #fff;
}
.ribbon-tabs .context {
    padding: 0 8px;
    border: 1px solid #0a96d8;
    background-color: #176792;
    color: #fff;
}
.ribbon-tabs .minimize {
    margin-left: 12px;
}
.ribbon {
    display: flex;
    height: 99px;
    background-color: #3b4453;
    padding: 1px 0 1px 1px;
}
.group {
    display: flex;
    flex-direction: column;
    justify-content: space-between;
    padding: 8px 4px 0 8px;
    border-right: 1px solid #222831;
}
.group:first-child {
    padding-left: 5px;
}
.group.tight {
    padding: 8px 7px 0 6px;
}
.group.roomy .tools {
    gap: 6px;
}
.group.last {
    border-right: 0;
}
.group h2 {
    height: 18px;
    line-height: 18px;
    text-align: center;
}
.group h2 .caret {
    margin: 0 0 2px 5px;
}
.tools {
    display: flex;
    gap: 5px;
}
.tool {
    position: relative;
    flex-direction: column;
    gap: 5px;
}
.tool.menu {
    padding: 0 10px 0 5px;
}
.tool.menu::after {
    content: "";
    position: absolute;
    right: 2px;
    top: 49px;
    border: 3px solid transparent;
    border-top-color: #e6e6e6;
    border-bottom: 0;
}
.kml {
    font: bold 8px Roboto, sans-serif;
    fill: #222;
}
.wf {
    font: bold 11px Roboto, sans-serif;
    fill: #222;
}

/* drawing and layout tabs */
.file-tabs {
    display: flex;
    align-items: center;
    height: 27px;
    padding: 3px 0 0 16px;
    background-color: #222831;
}
.slash {
    margin-left: 10px;
}
.ftab {
    height: 24px;
    padding: 0 7px;
}
.ftab.active {
    gap: 9px;
    padding: 0 11px 0 17px;
    background-color: #3b4453;
    font-weight: bold;
    clip-path: polygon(9px 0, 100% 0, calc(100% - 10px) 100%, 0 100%);
}
.add {
    margin-left: 9px;
}

/* workspace */
.workspace {
    flex: 1;
    min-height: 0;
    display: flex;
    background-color: #3b4453;
    padding: 4px 0;
}
.palette {
    width: 337px;
    margin: 2px 4px 5px 0;
    display: flex;
    flex-direction: column;
    color: #2c2c2c;
}
.palette-title {
    display: flex;
    align-items: center;
    gap: 6px;
    height: 20px;
    margin-bottom: 2px;
    padding: 0 0 2px 5px;
    border-radius: 3px 3px 0 0;
    background-color: #2e3440;
    color: #fff;
}
.grip {
    width: 4px;
    height: 10px;
    background: conic-gradient(at 1px 1px, transparent 75%, #d3d7dd 0) 0 0 / 2px 2px;
}
.grip.tall {
    width: 5px;
    height: 18px;
    background-size: 3px 3px;
}
.grip.wide {
    width: 10px;
    height: 4px;
}
.palette-body {
    flex: 1;
    display: flex;
    flex-direction: column;
    background-color: #d7d7d7;
    padding: 10px 18px;
}
.ptabs {
    display: flex;
    height: 55px;
    margin: 0 -8px;
    padding-left: 4px;
    border-bottom: 1px solid #9a9a9a;
    color: #111;
}
.ptab {
    flex-direction: column;
    gap: 5px;
    height: 52px;
    padding: 5px 8px 0;
}
.ptab svg {
    margin-top: auto;
}
.ptab span {
    margin-bottom: 5px;
}
.ptab.active {
    gap: 1px;
    margin-right: 3px;
    padding: 0 4px;
    border-bottom: 4px solid #111;
    background-color: #dbbab0;
}
.ptab.active span {
    margin-bottom: 3px;
}
.brand {
    margin: 32px auto 14px;
}
.welcome {
    color: #000;
    font-size: 22px;
    font-weight: 300;
    line-height: 30px;
    text-align: center;
}
.tagline {
    color: #000;
    line-height: 14px;
    text-align: center;
}
.news, .card {
    align-items: flex-start;
    justify-content: flex-start;
    color: #3c3c3c;
    line-height: 16px;
    text-align: left;
}
.news b, .card b {
    display: block;
    color: #2e2e2e;
}
.news {
    gap: 8px;
    height: 66px;
    margin-top: 12px;
    padding: 8px 0 0 9px;
    border: 1px dashed #6d6d6d;
}
.palette-body h3 {
    margin: 25px 8px 3px;
    color: #000;
    font-size: 16px;
    line-height: 20px;
}
.card {
    gap: 9px;
    margin: 0 8px 8px;
    padding: 9px 12px 7px 13px;
    background-color: #aeaeae;
}
.card svg {
    opacity: 0.85;
}
.palette-body .card + h3 {
    margin-top: 6px;
}
.palette-foot {
    display: flex;
    align-items: center;
    margin: auto -8px 0;
    font-size: 11px;
    line-height: 20px;
}
.sep {
    width: 1px;
    height: 16px;
    margin: 0 9px 0 10px;
    background-color: #b5b9c0;
}
.palette-foot input {
    appearance: none;
    width: 14px;
    height: 14px;
    margin: 0 5px 0 0;
    border: 1px solid #555;
    background-color: #fff;
}
.palette-foot input:checked::before {
    content: "";
    display: block;
    width: 9px;
    height: 5px;
    margin: 2px 1px;
    border: solid #111;
    border-width: 0 0 2px 2px;
    transform: rotate(-50deg);
}

.canvas {
    position: relative;
    flex: 1;
    min-width: 0;
    background-color: #898989;
}
.drawing {
    width: 100%;
    height: 100%;
}
.island {
    isolation: isolate;
}
.relief {
    mix-blend-mode: soft-light;
    opacity: 0.9;
}
.view-btns {
    position: absolute;
    top: 9px;
    right: 10px;
    display: flex;
    gap: 8px;
}
.command {
    position: absolute;
    left: 50%;
    bottom: 0;
    display: flex;
    align-items: center;
    gap: 9px;
    width: 59%;
    height: 27px;
    padding-left: 4px;
    border: 1px solid #45494f;
    border-radius: 3px;
    background-color: #4a4f59;
    transform: translateX(-50%);
}
.command-line {
    flex: 1;
    display: flex;
    align-items: center;
    gap: 7px;
    height: 25px;
    padding: 0 4px;
    border-radius: 2px;
    background-color: #dcdcdc;
    margin-left: -4px;
}
.command-line input {
    flex: 1;
    padding: 0;
    border: 0;
    background: none;
    color: #333;
    font: 12px "Liberation Mono", monospace;
}
.command-line input::placeholder {
    color: #808080;
    font-style: italic;
    opacity: 1;
}
.properties {
    width: 24px;
    margin-bottom: 3px;
    padding: 5px 0 2px 3px;
    background-color: #222831;
}
.properties div {
    position: relative;
    display: flex;
    align-items: center;
    justify-content: center;
    height: 100%;
    background-color: #3b4453;
}
.properties .grip {
    position: absolute;
    top: 2px;
}
.properties span {
    writing-mode: vertical-rl;
    transform: rotate(180deg);
}

/* status bar */
.status {
    display: flex;
    justify-content: space-between;
    height: 29px;
    margin-bottom: 1px;
    background-color: #222831;
}
.layouts {
    height: 25px;
    padding-top: 0;
}
.layouts .ftab {
    padding: 0 8px;
}
.layouts .ftab.active {
    padding: 0 17px;
}
.layouts .ftab + .slash {
    margin-left: 0;
}
.status-tools {
    display: flex;
    gap: 2px;
    padding: 2px 1px 3px 0;
}
.status-tools > * {
    display: flex;
    background-color: #3b4453;
}
.coords {
    width: 141px;
    justify-content: flex-end;
    padding-right: 5px;
}
.space {
    width: 42px;
}
.cell button {
    width: 24px;
}
.cell .more {
    width: 16px;
}
.cell.wide button {
    width: 32px;
}
.cell.on {
    background-color: #5b8fc7;
}
```
